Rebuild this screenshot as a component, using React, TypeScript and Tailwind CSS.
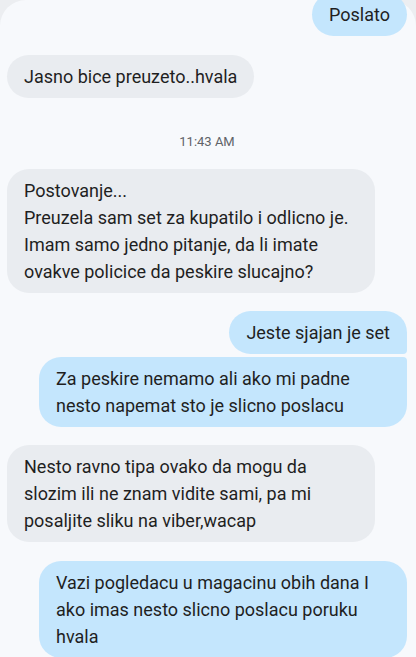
import React from 'react';

type Side = 'in' | 'out';

type Msg = {
  side: Side;
  lines: string[];
  // corner shape when bubbles are stacked in one group
  pos?: 'single' | 'top' | 'bottom';
  mt: string;
};

const messages: Msg[] = [
  { side: 'out', lines: ['Poslato'], mt: '-mt-[7px]' },
  { side: 'in', lines: ['Jasno bice preuzeto..hvala'], mt: 'mt-[19px]' },
];

const rest: Msg[] = [
  {
    side: 'in',
    lines: [
      'Postovanje...',
      'Preuzela sam set za kupatilo i odlicno je.',
      'Imam samo jedno pitanje, da li imate',
      'ovakve policice da peskire slucajno?'
    ],
    mt: 'mt-0'
  },
  { side: 'out', lines: ['Jeste sjajan je set'], pos: 'top', mt: 'mt-[18px]' },
  {
    side: 'out',
    lines: ['Za peskire nemamo ali ako mi padne', 'nesto napemat sto je slicno poslacu'],
    pos: 'bottom',
    mt: 'mt-[3px]'
  },
  {
    side: 'in',
    lines: ['Nesto ravno tipa ovako da mogu da', 'slozim ili ne znam vidite sami, pa mi', 'posaljite sliku na viber,wacap'],
    mt: 'mt-[18px]'
  },
  {
    side: 'out',
    lines: ['Vazi pogledacu u magacinu obih dana I', 'ako imas nesto slicno poslacu poruku', 'hvala'],
    mt: 'mt-[19px]'
  }
];

function Bubble({ msg }: { msg: Msg }) {
  const isOut = msg.side === 'out';
  const wide = msg.lines.length > 1;
  let shape = 'rounded-[22px]';
  if (msg.pos === 'top') shape = 'rounded-[22px] rounded-br-[4px]';
  if (msg.pos === 'bottom') shape = 'rounded-[22px] rounded-tr-[4px]';

  return (
    <div className={`flex ${isOut ? 'justify-end' : 'justify-start'} ${msg.mt}`}>
      <div
        className={`${shape} ${isOut ? 'bg-[#c4e6fd]' : 'bg-[#e9ecf0]'} ${
          wide ? 'w-[368px]' : ''
        } px-[17px] py-[8px] text-[18px] leading-[27px] text-[#1f1f1f]`}>
        {msg.lines.map((l, i) => (
          <div key={i} className="whitespace-nowrap">
            {l}
          </div>
        ))}
      </div>
    </div>
  );
}

export default function App() {
  return (
    <div className="h-[657px] w-[416px] overflow-hidden bg-[#eceef1]" style={{ fontFamily: 'Roboto, "Noto Sans", sans-serif' }}>
      <div className="flow-root h-full rounded-t-[26px] bg-[#f7f9fc] pl-[7px] pr-[9px]">
        {messages.map((m, i) => (
          <Bubble key={i} msg={m} />
        ))}
        <div className="pt-[36px] pb-[19px] text-center text-[13px] leading-[16px] text-[#5f6368]">11:43 AM</div>
        {rest.map((m, i) => (
          <Bubble key={i} msg={m} />
        ))}
      </div>
    </div>
  );
}
